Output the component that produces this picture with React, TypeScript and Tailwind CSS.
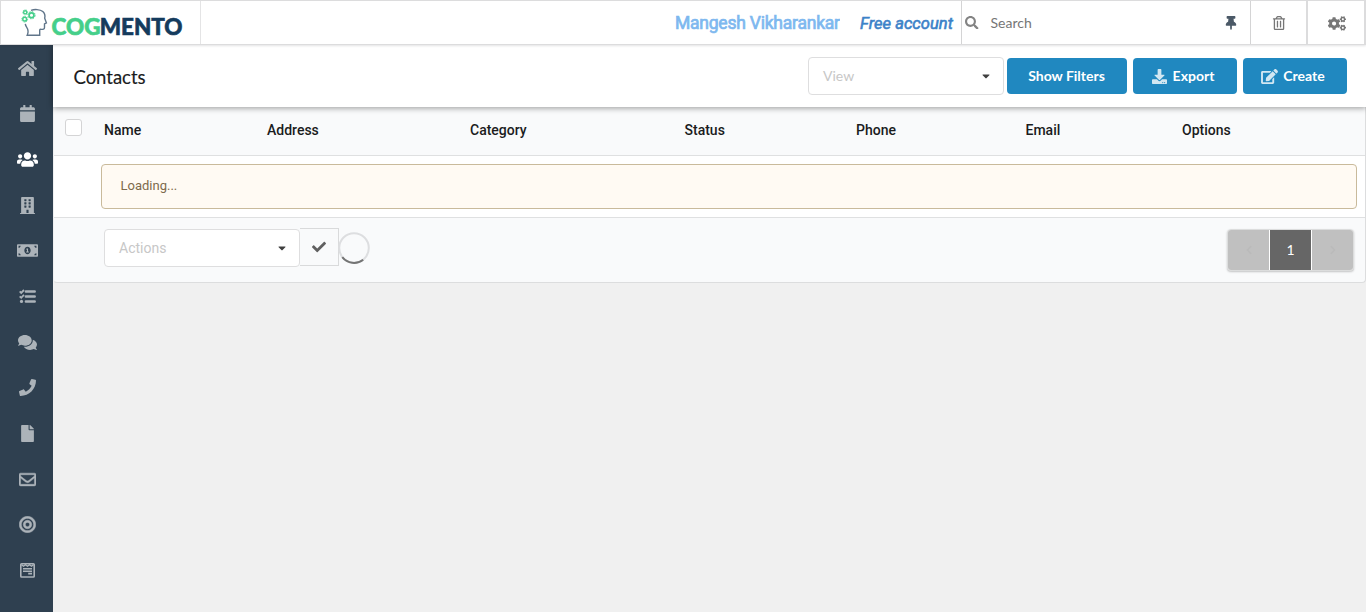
import React from "react";
import {
  FaHome, FaCalendar, FaUsers, FaBuilding, FaMoneyBillAlt, FaComments, FaPhone, FaFile,
  FaRegEnvelope, FaBullseye, FaThumbtack, FaRegTrashAlt, FaCogs, FaSearch, FaDownload, FaEdit,
  FaCheck, FaCaretDown, FaChevronLeft, FaChevronRight,
} from "react-icons/fa";

function FormIcon() {
  return (
    <svg width="15" height="15" viewBox="0 0 15 15" fill="none" stroke="currentColor">
      <rect x="0.8" y="0.8" width="13.4" height="13.2" rx="0.8" strokeWidth="1.6" />
      <path d="M1.5 1.6l2 1.6 2-1.6 2 1.6 2-1.6 2 1.6 2-1.6" strokeWidth="1.4" />
      <path d="M3 5.7h9M3 8.2h9M8.2 10.6h3.8" strokeWidth="1.6" />
    </svg>
  );
}

function TasksIcon() {
  return (
    <svg width="17" height="15" viewBox="0 0 17 15" fill="none" stroke="currentColor">
      <path d="M6.9 2.4h8.8M6.9 7.4h8.8M6.9 12.4h8.8" strokeWidth="2.5" strokeLinecap="round" />
      <path d="M0.7 2.4l1.5 1.5L5 1M0.7 7.3l1.5 1.5L5 5.9" strokeWidth="1.8" />
      <circle cx="2.5" cy="12.4" r="1.6" fill="currentColor" stroke="none" />
    </svg>
  );
}

function Logo() {
  return (
    <svg width="164" height="36" viewBox="0 0 164 36" className="block">
      <path
        d="M11 5.4C14 4.2 20 4 22.8 6.6c2.3 2.1 2.4 4.6 1.9 6.6l1.7 4.6-1.9 1v3.6c0 1.7-1.2 2.1-4.2 1.9-.5 0-.6.5-.6 1.3v4.7H7.2c1.2-2.5 1.2-5.5-.6-8.2-.8-1.2-1.2-2-1.3-3.2"
        fill="none" stroke="#60758a" strokeWidth="1.4"
      />
      <g fill="none" stroke="#45cf8a">
        <circle cx="11.5" cy="10.2" r="2.4" strokeWidth="1.7" />
        <circle cx="11.5" cy="10.2" r="3.6" strokeWidth="1" strokeDasharray="1.6 1.2" />
        <circle cx="5.2" cy="7.3" r="1.6" strokeWidth="1.4" />
        <circle cx="5.2" cy="7.3" r="2.5" strokeWidth="0.8" strokeDasharray="1 0.8" />
        <circle cx="4.7" cy="14.2" r="1.9" strokeWidth="1.5" />
        <circle cx="4.7" cy="14.2" r="2.9" strokeWidth="0.9" strokeDasharray="1.2 1" />
      </g>
      <g fontFamily="Lato, sans-serif" fontWeight="900" fontSize="22" strokeWidth="0.6">
        <text x="31.5" y="30.2" textLength="49" lengthAdjust="spacingAndGlyphs" fill="#45cf8a" stroke="#45cf8a">COG</text>
        <text x="79.7" y="30.2" textLength="82.8" lengthAdjust="spacingAndGlyphs" fill="#143b5d" stroke="#143b5d">MENTO</text>
      </g>
    </svg>
  );
}

const nav = [
  { name: "home", icon: <FaHome style={undefined} className="h-[17px] w-[19px] shrink-0" /> },
  { name: "calendar", icon: <FaCalendar /> },
  { name: "contacts", icon: <FaUsers className="h-[17px] w-[21px] shrink-0" />, active: true },
  { name: "companies", icon: <FaBuilding /> },
  { name: "deals", icon: <FaMoneyBillAlt className="h-[17px] w-[21px] shrink-0" /> },
  { name: "tasks", icon: <TasksIcon /> },
  { name: "cases", icon: <FaComments className="h-[17px] w-[19px] shrink-0" /> },
  { name: "calls", icon: <FaPhone /> },
  { name: "documents", icon: <FaFile /> },
  { name: "email", icon: <FaRegEnvelope className="stroke-current stroke-[14]" /> },
  { name: "campaigns", icon: <FaBullseye className="stroke-current stroke-[14]" /> },
  { name: "forms", icon: <FormIcon /> },
];

const button =
  "flex h-9 items-center justify-center rounded bg-[#2088c0] font-['Lato',sans-serif] text-sm font-bold text-white";

function Dropdown({ label }: { label: string }) {
  return (
    <div className="flex h-[38px] w-[196px] items-center justify-between rounded border border-[#dededf] bg-white pl-3.5 pr-[11px]">
      <span className="text-[#c7c7c7]">{label}</span>
      <FaCaretDown className="size-3 text-[#404040]" />
    </div>
  );
}

export default function App() {
  return (
    <div className="flex h-[612px] w-full flex-col overflow-hidden bg-[#f0f0f0] font-['Roboto',sans-serif] text-sm leading-5 text-[#1b1c1d]">
      <header className="relative z-20 flex h-[45px] shrink-0 border border-r-2 border-[#dcdcdd] bg-white shadow-[0_1px_2px_rgba(34,36,38,0.12)]">
        <div className="w-[200px] border-r border-[#e4e4e5] pl-[19px] pt-1">
          <Logo />
        </div>
        <div className="flex flex-1 items-center justify-end text-[17.5px]">
          <span className="mr-5 text-[#7eb8ef]">
            <svg width="165" height="24" className="block">
              <text x="0" y="18" textLength="165" fill="currentColor" stroke="currentColor" strokeWidth="0.7">Mangesh Vikharankar</text>
            </svg>
          </span>
          <span className="mr-2 text-[16.5px] italic text-[#3c82c8]">
            <svg width="93" height="24" className="block overflow-visible">
              <text x="0" y="17.5" textLength="93" fill="currentColor" stroke="currentColor" strokeWidth="0.6">Free account</text>
            </svg>
          </span>
        </div>
        <div className="flex w-[289px] items-center border-l border-[#d4d4d5] pl-[3px] font-['Lato',sans-serif] text-[#767676]">
          <FaSearch className="size-[13.5px] text-[#838383]" />
          <span className="ml-3 flex-1">Search</span>
          <FaThumbtack className="mr-3 size-3.5 text-[#4b5967]" />
        </div>
        <div className="flex w-14 items-center justify-center border-l border-[#d4d4d5] pl-px pt-px text-[#767676]">
          <FaRegTrashAlt className="size-3.5" />
        </div>
        <div className="flex w-[58px] items-center justify-center border-l-2 border-[#dcdcdd] pl-0.5 pt-0.5 text-[#767676]">
          <FaCogs className="h-[15px] w-[18px]" />
        </div>
      </header>

      <div className="flex min-h-0 flex-1">
        <nav className="w-[53px] shrink-0 bg-[#2f4050]">
          {nav.map((n) => (
            <div
              key={n.name}
              className={
                "flex h-[45.67px] items-center justify-center pl-[2px] pt-px text-[17px] " +
                (n.active ? "text-white" : "text-[#acb3b9]")
              }
            >
              {n.icon}
            </div>
          ))}
        </nav>

        <main className="min-w-0 flex-1">
          <div className="relative z-10 flex h-[62px] items-center bg-white pl-5 pr-[19px] shadow-[0_1px_6px_rgba(0,0,0,0.4)]">
            <h1 className="flex-1 pt-1 font-['Lato',sans-serif] text-[18.5px]">
              <svg width="80" height="24" className="block">
                <text x="0.5" y="18" textLength="72" fill="currentColor" stroke="currentColor" strokeWidth="0.15">Contacts</text>
              </svg>
            </h1>
            <div className="flex font-['Lato',sans-serif]">
              <Dropdown label="View" />
              <button className={button + " ml-[3px] mt-px w-[120px] pr-px"}>Show Filters</button>
              <button className={button + " ml-1.5 mt-px w-[104px] pr-1"}>
                <FaDownload className="mr-[6px] size-[15px] opacity-80" />
                Export
              </button>
              <button className={button + " ml-1.5 mt-px w-[104px] pr-1"}>
                <FaEdit className="mr-[5px] h-[15px] w-[17px] opacity-80" />
                Create
              </button>
            </div>
          </div>

          <section className="rounded-b border-x border-b border-[#dcddde] border-l-[#eeeff0] bg-[#f9fafb]">
            <div className="flex h-12 items-start pl-[11px] pt-3 font-medium">
              <div className="mr-[22px] h-[17px] w-[17px] rounded-[3px] border border-[#d4d4d5] bg-white" />
              <div className="grid flex-1 grid-cols-[163px_203px_214.5px_171.5px_169.5px_156.5px_1fr] pt-px">
                <span>Name</span>
                <span>Address</span>
                <span>Category</span>
                <span>Status</span>
                <span>Phone</span>
                <span>Email</span>
                <span>Options</span>
              </div>
            </div>
            <div className="h-[63px] border-y border-[#dfe0e1] bg-white pl-[47px] pr-2 pt-2">
              <div className="h-[45px] rounded border border-[#c9ba9b] bg-[#fffaf3] pl-[18.5px] pt-[11px] text-[13px] text-[#7d6a4c]">
                Loading...
              </div>
            </div>
            <div className="flex h-16 items-start pl-[50px] pr-[11px] pt-[10px]">
              <div className="pt-px">
                <Dropdown label="Actions" />
              </div>
              <div className="flex h-[38px] w-[39px] items-center justify-center border border-l-0 border-[#d9dadb]">
                <FaCheck className="size-3.5 text-[#606060]" />
              </div>
              <svg width="32" height="32" viewBox="0 0 32 32" className="-ml-px mt-1 fill-none">
                <circle cx="16" cy="16" r="14.8" stroke="#dddee0" strokeWidth="2" />
                <path d="M4.3 25.2A14.8 14.8 0 0 0 25.2 27.7" stroke="#747474" strokeWidth="2" />
              </svg>
              <div className="ml-auto mt-px flex h-[42px] w-[127px] gap-px overflow-hidden rounded border border-[#dcdddd] bg-white font-['Lato',sans-serif] shadow-[0_1px_2px_rgba(34,36,38,0.25)]">
                <div className="flex flex-1 items-center justify-center bg-[#c0c0c0] text-[#bababa]"><FaChevronLeft className="size-2.5" /></div>
                <div className="flex w-[41px] items-center justify-center bg-[#666] text-white">1</div>
                <div className="flex flex-1 items-center justify-center bg-[#c0c0c0] text-[#bababa]"><FaChevronRight className="size-2.5" /></div>
              </div>
            </div>
          </section>
        </main>
      </div>
    </div>
  );
}
